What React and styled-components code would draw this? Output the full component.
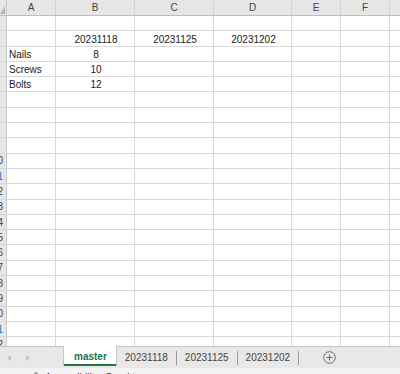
import React from "react";
import styled, { createGlobalStyle } from "styled-components";

const GlobalStyle = createGlobalStyle`
  html, body {
    margin: 0;
    padding: 0;
    background: #fff;
    overflow: hidden;
  }
`;

const Page = styled.div`
  width: 400px;
  height: 374px;
  display: flex;
  flex-direction: column;
  overflow: hidden;
  font-family: "Liberation Sans", Arial, sans-serif;
`;

const Sheet = styled.div`
  height: 346px;
  overflow: hidden;
  flex-shrink: 0;
`;

const Grid = styled.div`
  display: grid;
  grid-template-columns: 7px 49px 79px 79px 78px 49px 49px 20px;
  grid-template-rows: 16px;
  grid-auto-rows: 15.3px;
`;

const Corner = styled.div`
  position: relative;
  background: #e6e6e6;
  border-right: 1px solid #c9c9c9;
  border-bottom: 1px solid #bdbdbd;

  &::after {
    content: "";
    position: absolute;
    right: 1px;
    bottom: 1px;
    border-style: solid;
    border-width: 0 0 8px 5px;
    border-color: transparent transparent #b5b5b5 transparent;
  }
`;

const ColHead = styled.div`
  background: #e6e6e6;
  border-right: 1px solid #d2d2d2;
  border-bottom: 1px solid #bdbdbd;
  display: flex;
  align-items: center;
  justify-content: center;
  font-size: 10px;
  color: #444;
`;

const RowHead = styled.div`
  background: #e6e6e6;
  border-right: 1px solid #c9c9c9;
  border-bottom: 1px solid #d8d8d8;
  display: flex;
  align-items: center;
  justify-content: flex-end;
  overflow: hidden;
  padding-right: 3px;
  font-size: 10px;
  color: ${(p) => (p.$tint ? "#2f75b5" : "#444")};
`;

const Cell = styled.div`
  border-right: 1px solid #d9d9d9;
  border-bottom: 1px solid #d9d9d9;
  display: flex;
  align-items: flex-end;
  justify-content: ${(p) => (p.$center ? "center" : "flex-start")};
  padding: 0 0 1px 2px;
  font-size: 10px;
  color: #1a1a1a;
  white-space: nowrap;
  overflow: hidden;
`;

const TabBar = styled.div`
  height: 22px;
  flex-shrink: 0;
  display: flex;
  align-items: stretch;
  background: #e8e8e8;
  border-top: 1px solid #c6c6c6;
  box-sizing: border-box;
`;

const Nav = styled.div`
  width: 63px;
  display: flex;
  align-items: center;
  gap: 15px;
  padding-left: 7px;
  box-sizing: border-box;
`;

const Arrow = styled.span`
  width: 0;
  height: 0;
  border-top: 3px solid transparent;
  border-bottom: 3px solid transparent;
  ${(p) =>
    p.$dir === "left"
      ? "border-right: 4px solid #c4c4c4;"
      : "border-left: 4px solid #c4c4c4;"}
`;

const Tab = styled.div`
  display: flex;
  align-items: center;
  padding: ${(p) => (p.$active ? "0 9px 0 10px" : "0 8px")};
  font-size: 10px;
  color: ${(p) => (p.$active ? "#217346" : "#444")};
  font-weight: ${(p) => (p.$active ? 700 : 400)};
  background: ${(p) => (p.$active ? "#fff" : "transparent")};
  border-left: ${(p) => (p.$active ? "1px solid #c6c6c6" : "none")};
  border-right: ${(p) => (p.$active ? "1px solid #c6c6c6" : "none")};
  box-shadow: ${(p) => (p.$active ? "inset 0 -2px 0 #217346" : "none")};
  margin-top: ${(p) => (p.$active ? "-1px" : "0")};
  margin-bottom: ${(p) => (p.$active ? "2px" : "0")};
`;

const Divider = styled.span`
  width: 1px;
  align-self: center;
  height: 14px;
  background: #9a9a9a;
`;

const AddButton = styled.div`
  display: flex;
  align-items: center;
  margin-left: 24px;
`;

const StatusBar = styled.div`
  height: 22px;
  flex-shrink: 0;
  display: flex;
  align-items: flex-start;
  gap: 4px;
  padding: 4px 0 0 31px;
  box-sizing: border-box;
  background: #f3f3f3;
  font-size: 10px;
  color: #333;
`;

const columns = ["A", "B", "C", "D", "E", "F", ""];

const data = [
  [],
  ["", "20231118", "20231125", "20231202"],
  ["Nails", "8"],
  ["Screws", "10"],
  ["Bolts", "12"],
];

const TOTAL_ROWS = 22;

const App = () => {
  const rows = Array.from({ length: TOTAL_ROWS }, (_, i) => data[i] || []);

  return (
    <Page>
      <GlobalStyle />
      <Sheet>
        <Grid>
          <Corner />
          {columns.map((c, i) => (
            <ColHead key={i}>{c}</ColHead>
          ))}
          {rows.map((row, r) => {
            const n = r + 1;
            return (
              <React.Fragment key={r}>
                <RowHead $tint={n >= 10 && n % 10 === 1}>
                  {n >= 10 ? n : ""}
                </RowHead>
                {columns.map((_, c) => (
                  <Cell key={c} $center={c > 0}>
                    {row[c] || ""}
                  </Cell>
                ))}
              </React.Fragment>
            );
          })}
        </Grid>
      </Sheet>
      <TabBar>
        <Nav>
          <Arrow $dir="left" />
          <Arrow $dir="right" />
        </Nav>
        <Tab $active>master</Tab>
        <Tab>20231118</Tab>
        <Divider />
        <Tab>20231125</Tab>
        <Divider />
        <Tab>20231202</Tab>
        <Divider />
        <AddButton>
          <svg width="13" height="13" viewBox="0 0 13 13" fill="none" stroke="#6a6a6a" strokeWidth="1">
            <circle cx="6.5" cy="6.5" r="5.8" />
            <path d="M6.5 3.5v6M3.5 6.5h6" />
          </svg>
        </AddButton>
      </TabBar>
      <StatusBar>
        <svg width="10" height="10" viewBox="0 0 10 10" fill="none" stroke="#555" strokeWidth="1">
          <circle cx="5" cy="2" r="1.2" />
          <path d="M1 4h8M5 4v3M5 7l-2 3M5 7l2 3" />
        </svg>
        <span>Accessibility: Good to go</span>
      </StatusBar>
    </Page>
  );
};

export default App;
